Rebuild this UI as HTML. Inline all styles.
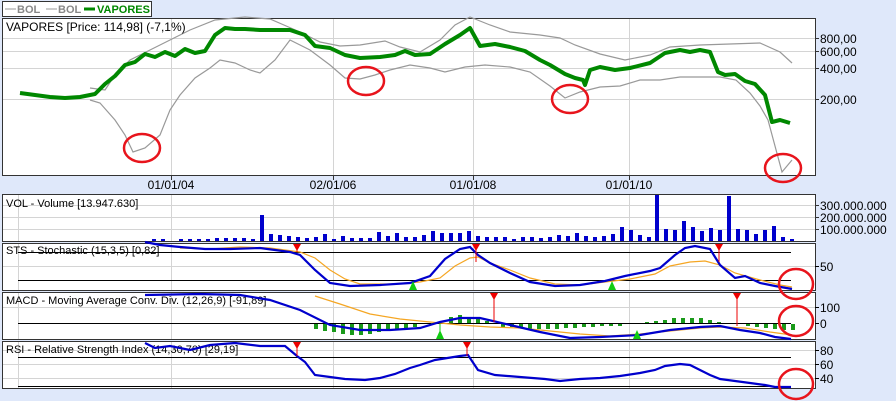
<!DOCTYPE html>
<html><head><meta charset="utf-8"><style>
html,body{margin:0;padding:0;background:#dfe8fa;width:896px;height:401px;overflow:hidden}
svg{display:block;font-family:"Liberation Sans",sans-serif}
</style></head><body>
<svg width="896" height="401" viewBox="0 0 896 401" xmlns="http://www.w3.org/2000/svg">
<rect width="896" height="401" fill="#dfe8fa"/>
<!-- legend -->
<rect x="2.5" y="1.5" width="149" height="15" fill="#fff" stroke="#333"/>
<line x1="5" y1="9" x2="16" y2="9" stroke="#999"/>
<text x="17" y="13" font-size="11" font-weight="bold" fill="#888">BOL</text>
<line x1="46" y1="9" x2="57" y2="9" stroke="#999"/>
<text x="58" y="13" font-size="11" font-weight="bold" fill="#888">BOL</text>
<line x1="84" y1="9" x2="95" y2="9" stroke="#080" stroke-width="3"/>
<text x="97" y="13" font-size="11" font-weight="bold" fill="#080">VAPORES</text>

<!-- main panel -->
<rect x="2.5" y="18.5" width="813" height="157" fill="#fff" stroke="#333"/>
<g stroke="#d4d4d4">
<line x1="3" y1="38.5" x2="815" y2="38.5"/><line x1="3" y1="51.5" x2="815" y2="51.5"/><line x1="3" y1="68.5" x2="815" y2="68.5"/><line x1="3" y1="99.5" x2="815" y2="99.5"/>
<line x1="171.5" y1="19" x2="171.5" y2="175"/><line x1="333.5" y1="19" x2="333.5" y2="175"/><line x1="473.5" y1="19" x2="473.5" y2="175"/><line x1="629.5" y1="19" x2="629.5" y2="175"/>
</g>
<g stroke="#333"><line x1="815" y1="38.5" x2="819" y2="38.5"/><line x1="815" y1="51.5" x2="819" y2="51.5"/><line x1="815" y1="68.5" x2="819" y2="68.5"/><line x1="815" y1="99.5" x2="819" y2="99.5"/>
<line x1="171.5" y1="176" x2="171.5" y2="180"/><line x1="333.5" y1="176" x2="333.5" y2="180"/><line x1="473.5" y1="176" x2="473.5" y2="180"/><line x1="629.5" y1="176" x2="629.5" y2="180"/></g>
<g font-size="12" fill="#000">
<text x="820" y="43">800,00</text><text x="820" y="56">600,00</text><text x="820" y="73">400,00</text><text x="820" y="104">200,00</text>
<text x="171" y="189" text-anchor="middle">01/01/04</text><text x="333" y="189" text-anchor="middle">02/01/06</text><text x="473" y="189" text-anchor="middle">01/01/08</text><text x="629" y="189" text-anchor="middle">01/01/10</text>
</g>
<polyline fill="none" stroke="#999" stroke-width="1.2" points="90,88 105,90 115,75 130,60 150,50 170,40 190,30 215,20 245,17 270,19 300,32 320,42 340,46 360,45 385,41 400,47 420,52 440,40 455,25 470,17 490,25 510,32 540,35 560,38 575,45 600,54 625,60 650,55 670,47 700,45 730,44 760,43 780,52 792,63"/>
<polyline fill="none" stroke="#999" stroke-width="1.2" points="90,100 100,103 115,120 125,135 133,152 145,148 160,135 170,110 180,95 195,78 210,68 220,60 235,63 250,70 260,73 275,60 290,40 310,50 330,65 345,78 360,79 375,75 390,70 410,65 430,68 445,72 465,67 485,65 510,67 530,72 550,86 565,98 580,92 600,87 620,86 640,80 660,80 680,77 700,77 720,77 736,80 750,93 760,106 768,120 782,172 792,160"/>
<polyline fill="none" stroke="#080" stroke-width="4" stroke-linejoin="round" points="20,93 35,95 50,97 65,98 80,97 95,94 105,84 115,76 125,65 135,62 145,54 155,57 165,52 175,56 185,49 195,53 205,51 215,35 225,28 235,29 245,29 260,30 275,30 290,30 305,35 315,46 330,48 345,55 360,58 380,57 395,55 405,51 415,55 430,54 445,44 460,35 470,28 480,46 495,44 510,47 525,51 540,60 550,65 565,74 575,78 583,80 585,85 590,70 600,67 615,70 630,68 650,63 665,53 680,50 690,52 700,50 710,52 718,72 725,75 735,74 745,81 755,84 765,95 772,122 780,120 790,123"/>
<text x="6" y="31" font-size="12">VAPORES [Price: 114,98] (-7,1%)</text>

<!-- volume -->
<rect x="2.5" y="194.5" width="813" height="47" fill="#fff" stroke="#333"/>
<g stroke="#d4d4d4"><line x1="3" y1="205.5" x2="815" y2="205.5"/><line x1="3" y1="217.5" x2="815" y2="217.5"/><line x1="3" y1="229.5" x2="815" y2="229.5"/>
<line x1="18.5" y1="195" x2="18.5" y2="241"/><line x1="171.5" y1="195" x2="171.5" y2="241"/><line x1="333.5" y1="195" x2="333.5" y2="241"/><line x1="473.5" y1="195" x2="473.5" y2="241"/><line x1="629.5" y1="195" x2="629.5" y2="241"/></g>
<g stroke="#333"><line x1="815" y1="205.5" x2="819" y2="205.5"/><line x1="815" y1="217.5" x2="819" y2="217.5"/><line x1="815" y1="229.5" x2="819" y2="229.5"/></g>
<g font-size="12"><text x="820" y="210">300.000.000</text><text x="820" y="222">200.000.000</text><text x="820" y="234">100.000.000</text></g>
<text x="6" y="207" font-size="11">VOL - Volume [13.947.630]</text>
<g fill="#0000cc">
<rect x="152" y="239" width="4" height="2"/><rect x="161" y="239" width="4" height="2"/><rect x="179" y="239" width="4" height="2"/><rect x="188" y="239" width="4" height="2"/><rect x="197" y="239" width="4" height="2"/><rect x="206" y="239" width="4" height="2"/><rect x="215" y="238" width="4" height="3"/><rect x="224" y="238" width="4" height="3"/><rect x="233" y="238" width="4" height="3"/><rect x="242" y="238" width="4" height="3"/><rect x="251" y="239" width="4" height="2"/>
<rect x="260" y="215" width="4" height="26"/><rect x="269" y="234" width="4" height="7"/><rect x="278" y="235" width="4" height="6"/><rect x="287" y="236" width="4" height="5"/><rect x="296" y="237" width="4" height="4"/><rect x="305" y="238" width="4" height="3"/><rect x="314" y="237" width="4" height="4"/><rect x="323" y="234" width="4" height="7"/><rect x="332" y="239" width="4" height="2"/><rect x="341" y="236" width="4" height="5"/><rect x="350" y="238" width="4" height="3"/><rect x="359" y="238" width="4" height="3"/><rect x="368" y="238" width="4" height="3"/><rect x="377" y="232" width="4" height="9"/><rect x="386" y="236" width="4" height="5"/><rect x="395" y="233" width="4" height="8"/><rect x="404" y="237" width="4" height="4"/><rect x="413" y="237" width="4" height="4"/><rect x="422" y="235" width="4" height="6"/><rect x="431" y="231" width="4" height="10"/><rect x="440" y="233" width="4" height="8"/><rect x="449" y="233" width="4" height="8"/><rect x="458" y="233" width="4" height="8"/><rect x="467" y="231" width="4" height="10"/><rect x="476" y="236" width="4" height="5"/><rect x="485" y="237" width="4" height="4"/><rect x="494" y="237" width="4" height="4"/><rect x="503" y="237" width="4" height="4"/><rect x="512" y="239" width="4" height="2"/><rect x="521" y="237" width="4" height="4"/><rect x="530" y="237" width="4" height="4"/><rect x="539" y="238" width="4" height="3"/><rect x="548" y="237" width="4" height="4"/><rect x="557" y="235" width="4" height="6"/><rect x="566" y="236" width="4" height="5"/><rect x="575" y="233" width="4" height="8"/><rect x="584" y="236" width="4" height="5"/><rect x="593" y="237" width="4" height="4"/>
<rect x="602" y="236" width="4" height="5"/><rect x="611" y="234" width="4" height="7"/><rect x="620" y="227" width="4" height="14"/><rect x="629" y="230" width="4" height="11"/><rect x="638" y="235" width="4" height="6"/><rect x="647" y="237" width="4" height="4"/><rect x="655" y="195" width="4" height="46"/><rect x="664" y="229" width="4" height="12"/><rect x="673" y="230" width="4" height="11"/><rect x="682" y="221" width="4" height="20"/><rect x="691" y="227" width="4" height="14"/><rect x="700" y="231" width="4" height="10"/><rect x="709" y="228" width="4" height="13"/><rect x="718" y="230" width="4" height="11"/><rect x="727" y="196" width="4" height="45"/><rect x="736" y="229" width="4" height="12"/><rect x="745" y="230" width="4" height="11"/><rect x="754" y="234" width="4" height="7"/><rect x="763" y="230" width="4" height="11"/><rect x="772" y="226" width="4" height="15"/><rect x="781" y="237" width="4" height="4"/><rect x="790" y="239" width="4" height="2"/>
</g>

<!-- STS -->
<rect x="2.5" y="243.5" width="813" height="47" fill="#fff" stroke="#333"/>
<g stroke="#d4d4d4"><line x1="3" y1="266.5" x2="815" y2="266.5"/><line x1="18.5" y1="244" x2="18.5" y2="290"/><line x1="171.5" y1="244" x2="171.5" y2="290"/><line x1="333.5" y1="244" x2="333.5" y2="290"/><line x1="473.5" y1="244" x2="473.5" y2="290"/><line x1="629.5" y1="244" x2="629.5" y2="290"/></g>
<g stroke="#000"><line x1="18" y1="252.5" x2="791" y2="252.5"/><line x1="18" y1="280.5" x2="791" y2="280.5"/><line x1="815" y1="266.5" x2="819" y2="266.5"/></g>
<text x="820" y="271" font-size="12">50</text>
<text x="6" y="254" font-size="11">STS - Stochastic (15,3,5) [0,82]</text>
<polyline fill="none" stroke="#f5a623" stroke-width="1.2" points="180,248 210,249 240,247 270,248 300,252 315,258 330,270 345,279 360,284 390,284 420,282 440,278 455,266 470,258 478,257 490,263 510,270 530,278 555,284 580,285 605,282 630,279 655,274 670,266 690,262 705,261 720,265 735,273 760,280 780,285 792,287"/>
<polyline fill="none" stroke="#0000cc" stroke-width="2.2" points="145,242 160,245 180,247 205,249 230,249 260,248 290,252 300,255 315,270 330,283 350,286 380,285 410,283 430,276 445,259 460,249 470,247 478,255 490,263 510,273 530,282 555,286 580,285 605,281 625,276 650,271 660,268 675,255 685,248 695,246 710,249 720,265 735,278 745,276 760,283 775,286 792,289"/>
<g fill="#e00" stroke="#e00"><line x1="297" y1="246" x2="297" y2="252"/><line x1="476" y1="246" x2="476" y2="262"/><line x1="719" y1="246" x2="719" y2="262"/></g>
<g fill="#e00"><polygon points="293,244 301,244 297,251"/><polygon points="472,244 480,244 476,251"/><polygon points="715,244 723,244 719,251"/></g>
<g fill="#1c1"><polygon points="409,290 417,290 413,281"/><polygon points="608,290 616,290 612,281"/></g>

<!-- MACD -->
<rect x="2.5" y="292.5" width="813" height="47" fill="#fff" stroke="#333"/>
<g stroke="#d4d4d4"><line x1="3" y1="307.5" x2="815" y2="307.5"/><line x1="18.5" y1="293" x2="18.5" y2="339"/><line x1="171.5" y1="293" x2="171.5" y2="339"/><line x1="333.5" y1="293" x2="333.5" y2="339"/><line x1="473.5" y1="293" x2="473.5" y2="339"/><line x1="629.5" y1="293" x2="629.5" y2="339"/></g>
<g stroke="#000"><line x1="18" y1="323.5" x2="791" y2="323.5"/><line x1="815" y1="307.5" x2="819" y2="307.5"/><line x1="815" y1="323.5" x2="819" y2="323.5"/></g>
<g font-size="12"><text x="820" y="312">100</text><text x="820" y="328">0</text></g>
<text x="6" y="304" font-size="11">MACD - Moving Average Conv. Div. (12,26,9) [-91,89]</text>
<g fill="#1a9a1a">
<rect x="314" y="324" width="4" height="5"/><rect x="323" y="324" width="4" height="7"/><rect x="332" y="324" width="4" height="8"/><rect x="341" y="324" width="4" height="10"/><rect x="350" y="324" width="4" height="11"/><rect x="359" y="324" width="4" height="11"/><rect x="368" y="324" width="4" height="10"/><rect x="377" y="324" width="4" height="8"/><rect x="386" y="324" width="4" height="6"/><rect x="395" y="324" width="4" height="5"/><rect x="404" y="324" width="4" height="4"/><rect x="413" y="324" width="4" height="3"/><rect x="431" y="323" width="4" height="1"/>
<rect x="449" y="317" width="4" height="6"/><rect x="458" y="315" width="4" height="8"/><rect x="467" y="317" width="4" height="6"/><rect x="476" y="319" width="4" height="4"/><rect x="485" y="321" width="4" height="2"/>
<rect x="501" y="324" width="4" height="3"/><rect x="510" y="324" width="4" height="3"/><rect x="519" y="324" width="4" height="4"/><rect x="528" y="324" width="4" height="5"/><rect x="537" y="324" width="4" height="5"/><rect x="546" y="324" width="4" height="5"/><rect x="555" y="324" width="4" height="5"/><rect x="564" y="324" width="4" height="4"/><rect x="573" y="324" width="4" height="4"/><rect x="582" y="324" width="4" height="3"/><rect x="591" y="324" width="4" height="3"/><rect x="600" y="324" width="4" height="2"/><rect x="609" y="324" width="4" height="2"/><rect x="618" y="324" width="4" height="2"/>
<rect x="645" y="322" width="4" height="1"/><rect x="654" y="321" width="4" height="2"/><rect x="663" y="320" width="4" height="3"/><rect x="672" y="318" width="4" height="5"/><rect x="681" y="318" width="4" height="5"/><rect x="690" y="318" width="4" height="5"/><rect x="699" y="318" width="4" height="5"/><rect x="708" y="320" width="4" height="3"/><rect x="717" y="322" width="4" height="1"/>
<rect x="746" y="324" width="4" height="2"/><rect x="755" y="324" width="4" height="3"/><rect x="764" y="324" width="4" height="4"/><rect x="773" y="324" width="4" height="5"/><rect x="782" y="324" width="4" height="6"/><rect x="791" y="324" width="4" height="6"/>
</g>
<polyline fill="none" stroke="#f5a623" stroke-width="1.2" points="315,296 340,304 370,314 400,319 430,322 460,325 490,327 520,328 550,331 580,334 610,336 640,334 670,331 700,328 720,327 745,328 770,332 792,335"/>
<polyline fill="none" stroke="#0000cc" stroke-width="2.2" points="145,295 200,294 240,295 270,300 300,310 330,325 360,330 390,330 420,328 440,322 460,318 480,318 510,325 540,332 570,338 600,337 640,335 670,330 700,327 720,326 740,330 760,333 775,337 791,339"/>
<g stroke="#e00"><line x1="494" y1="296" x2="494" y2="322"/><line x1="737" y1="296" x2="737" y2="326"/></g>
<g fill="#e00"><polygon points="490,293 498,293 494,300"/><polygon points="733,293 741,293 737,300"/></g>
<g fill="#1c1"><polygon points="436,339 444,339 440,330"/><polygon points="633,339 641,339 637,330"/></g>
<line x1="440" y1="324" x2="440" y2="339" stroke="#1c1"/>

<!-- RSI -->
<rect x="2.5" y="341.5" width="813" height="47" fill="#fff" stroke="#333"/>
<g stroke="#d4d4d4"><line x1="3" y1="350.5" x2="815" y2="350.5"/><line x1="3" y1="364.5" x2="815" y2="364.5"/><line x1="3" y1="378.5" x2="815" y2="378.5"/><line x1="18.5" y1="342" x2="18.5" y2="388"/><line x1="171.5" y1="342" x2="171.5" y2="388"/><line x1="333.5" y1="342" x2="333.5" y2="388"/><line x1="473.5" y1="342" x2="473.5" y2="388"/><line x1="629.5" y1="342" x2="629.5" y2="388"/></g>
<g stroke="#000"><line x1="18" y1="357.5" x2="791" y2="357.5"/><line x1="18" y1="386.5" x2="791" y2="386.5"/><line x1="815" y1="350.5" x2="819" y2="350.5"/><line x1="815" y1="364.5" x2="819" y2="364.5"/><line x1="815" y1="378.5" x2="819" y2="378.5"/></g>
<g font-size="12"><text x="820" y="355">80</text><text x="820" y="369">60</text><text x="820" y="383">40</text></g>
<text x="6" y="353" font-size="11">RSI - Relative Strength Index (14,30,70) [29,19]</text>
<polyline fill="none" stroke="#0000cc" stroke-width="2.2" points="145,343 155,348 170,346 190,350 210,345 235,343 260,346 285,346 297,356 305,362 315,375 330,377 345,379 365,380 380,378 395,374 410,368 420,365 435,360 460,356 468,355 478,370 495,375 520,377 545,379 560,381 580,379 600,378 620,376 640,373 655,370 665,366 680,364 690,365 700,370 710,375 720,379 735,381 750,383 765,385 775,387 791,387"/>
<g stroke="#e00"><line x1="297" y1="345" x2="297" y2="356"/><line x1="467" y1="345" x2="467" y2="356"/></g>
<g fill="#e00"><polygon points="293,342 301,342 297,349"/><polygon points="463,342 471,342 467,349"/></g>

<!-- red circles -->
<g fill="none" stroke="#e8141c" stroke-width="2.5">
<ellipse cx="142" cy="148" rx="18" ry="14"/>
<ellipse cx="366" cy="81" rx="18" ry="14"/>
<ellipse cx="570" cy="99" rx="18" ry="14"/>
<ellipse cx="783" cy="168" rx="18" ry="14"/>
<ellipse cx="796" cy="284" rx="17" ry="15"/>
<ellipse cx="796" cy="321" rx="17" ry="15"/>
<ellipse cx="796" cy="384" rx="17" ry="15"/>
</g>
</svg>
</body></html>
